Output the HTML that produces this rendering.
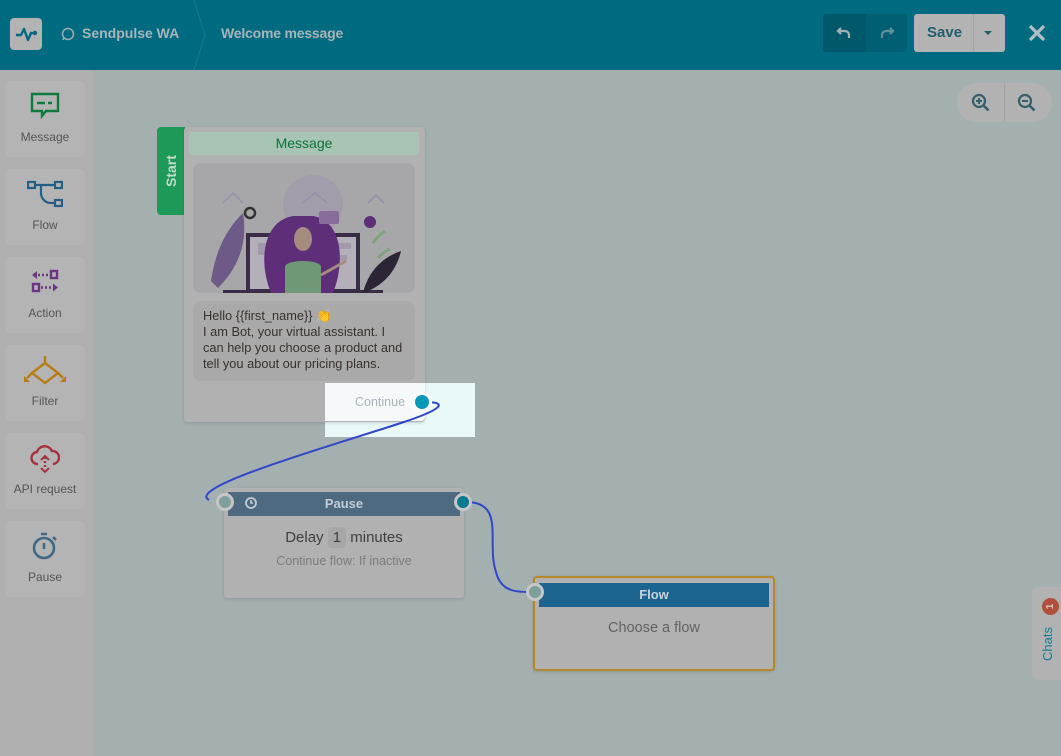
<!DOCTYPE html>
<html><head><meta charset="utf-8"><style>
*{box-sizing:border-box;margin:0;padding:0}
body{width:1061px;height:756px;overflow:hidden;font-family:"Liberation Sans",sans-serif;background:#a4b0b0;position:relative}
.hdr{position:absolute;left:0;top:0;width:1061px;height:70px;background:#006a80}
.abs{position:absolute}
.side{position:absolute;left:0;top:70px;width:95px;height:686px;background:#afafaf;border-right:1px solid #a3aaaa}
.tool{position:absolute;left:5px;width:80px;height:76px;background:#b4b4b4;border-radius:5px;text-align:center;font-size:12px;color:#555}
.tool svg{position:absolute;left:25px;top:10px}
.tool span{position:absolute;left:0;right:0;top:49px}
.node{position:absolute;background:#b1b1b1;border-radius:4px;box-shadow:0 1px 3px rgba(0,0,0,.15)}
.dot{position:absolute;width:18px;height:18px;border-radius:50%;border:3px solid #c6c6c6}
</style></head><body>
<div class="hdr">
 <div class="abs" style="left:10px;top:18px;width:32px;height:32px;background:#b3b3b3;border-radius:4px">
  <svg width="32" height="32"><path d="M6 17h5l3-6 4 11 3-7h3" fill="none" stroke="#006a80" stroke-width="2.4" stroke-linejoin="round"/><circle cx="25" cy="15" r="2.2" fill="#006a80"/></svg>
 </div>
 <svg class="abs" style="left:61px;top:27px" width="14" height="14"><circle cx="7" cy="7" r="5.5" fill="none" stroke="#a0aeb0" stroke-width="1.5"/><path d="M2 13l1.2-3" stroke="#a0aeb0" stroke-width="1.5"/></svg>
 <div class="abs" style="left:82px;top:25px;font-size:14px;font-weight:bold;color:#a8b4b6">Sendpulse WA</div>
 <svg class="abs" style="left:190px;top:0" width="20" height="70"><path d="M4 0l11 35L4 70" fill="none" stroke="#1b7a8e" stroke-width="1"/></svg>
 <div class="abs" style="left:221px;top:25px;font-size:14px;font-weight:bold;color:#a8b4b6;letter-spacing:-0.2px">Welcome message</div>
 <div class="abs" style="left:823px;top:14px;width:84px;height:38px;background:#005f73;border-radius:3px"></div>
 <div class="abs" style="left:823px;top:14px;width:43px;height:38px;background:#00586b;border-radius:3px 0 0 3px"></div>
 <svg class="abs" style="left:836px;top:24px" width="18" height="18"><path d="M5 4L2 7l3 3M2 7h7a4 4 0 014 4v3" fill="none" stroke="#a3b0b2" stroke-width="2.2"/></svg>
 <svg class="abs" style="left:877px;top:24px" width="18" height="18"><path d="M13 4l3 3-3 3M16 7H9a4 4 0 00-4 4v3" fill="none" stroke="#5f8f99" stroke-width="2.2"/></svg>
 <div class="abs" style="left:914px;top:14px;width:91px;height:38px;background:#b3b3b3;border-radius:3px"></div>
 <div class="abs" style="left:973px;top:14px;width:1px;height:38px;background:#a2a2a2"></div>
 <div class="abs" style="left:927px;top:24px;font-size:15px;font-weight:bold;color:#1d5f6e">Save</div>
 <svg class="abs" style="left:983px;top:30px" width="10" height="6"><path d="M1 1h8L5 5z" fill="#1d5f6e"/></svg>
 <svg class="abs" style="left:1027px;top:23px" width="20" height="20"><path d="M3 3l14 14M17 3L3 17" stroke="#b3c0c2" stroke-width="3.2"/></svg>
</div>

<div class="side">
 <div class="tool" style="top:11px"><svg width="30" height="30"><path d="M2 3h26v17H16l-4 5v-5H2z" fill="none" stroke="#0e7a3c" stroke-width="2.4"/><path d="M7 12h8M18 12h4" stroke="#0e7a3c" stroke-width="2.4"/></svg><span>Message</span></div>
 <div class="tool" style="top:99px"><svg width="36" height="30" style="left:22px"><rect x="1" y="3" width="7" height="6" fill="none" stroke="#235e86" stroke-width="2.2"/><rect x="28" y="3" width="7" height="6" fill="none" stroke="#235e86" stroke-width="2.2"/><rect x="28" y="21" width="7" height="6" fill="none" stroke="#235e86" stroke-width="2.2"/><path d="M8 6h20M14 6v8a10 10 0 0010 10h4" fill="none" stroke="#235e86" stroke-width="2.2"/></svg><span>Flow</span></div>
 <div class="tool" style="top:187px"><svg width="30" height="30"><path d="M2 8l5-4v8z" fill="#6c3583"/><path d="M8 8h2M12 8h2M16 8h2" stroke="#6c3583" stroke-width="2.4"/><rect x="21" y="4" width="6" height="7" fill="none" stroke="#6c3583" stroke-width="2.4"/><rect x="3" y="17" width="6" height="7" fill="none" stroke="#6c3583" stroke-width="2.4"/><path d="M11 20.5h2M15 20.5h2M19 20.5h2" stroke="#6c3583" stroke-width="2.4"/><path d="M28 20.5l-5-4v8z" fill="#6c3583"/></svg><span>Action</span></div>
 <div class="tool" style="top:275px"><svg width="44" height="30" style="left:18px"><path d="M22 1v7M22 8L9 18 22 28 35 18z" fill="none" stroke="#b87d12" stroke-width="2.4"/><path d="M9 18l-5 5M35 18l5 5" stroke="#b87d12" stroke-width="2.4"/><path d="M1 21l6 6H1zM43 21l-6 6h6z" fill="#b87d12"/></svg><span>Filter</span></div>
 <div class="tool" style="top:363px"><svg width="30" height="32"><path d="M8 21a6 6 0 01-1-12 8 8 0 0115-1 6 6 0 011 13" fill="none" stroke="#a5333f" stroke-width="2.4"/><path d="M15 14v12" stroke="#a5333f" stroke-width="2.4" stroke-dasharray="2 2"/><path d="M11 17l4-4 4 4M11 25l4 4 4-4" fill="none" stroke="#a5333f" stroke-width="2"/></svg><span>API request</span></div>
 <div class="tool" style="top:451px"><svg width="30" height="30"><circle cx="14" cy="17" r="10" fill="none" stroke="#3e6886" stroke-width="2.6"/><path d="M14 12v6" stroke="#3e6886" stroke-width="2.6"/><path d="M11 3h6M23 6l3 3" stroke="#3e6886" stroke-width="2.6"/></svg><span>Pause</span></div>
</div>

<div class="abs" style="left:957px;top:83px;width:95px;height:39px;background:#b2b2b2;border-radius:20px"></div>
<div class="abs" style="left:1004px;top:83px;width:1px;height:39px;background:#a4a4a4"></div>
<svg class="abs" style="left:971px;top:93px" width="20" height="20"><circle cx="8" cy="8" r="6" fill="none" stroke="#365e6c" stroke-width="2.2"/><path d="M12.5 12.5l5 5" stroke="#365e6c" stroke-width="2.6"/><path d="M5 8h6M8 5v6" stroke="#365e6c" stroke-width="2"/></svg>
<svg class="abs" style="left:1017px;top:93px" width="20" height="20"><circle cx="8" cy="8" r="6" fill="none" stroke="#365e6c" stroke-width="2.2"/><path d="M12.5 12.5l5 5" stroke="#365e6c" stroke-width="2.6"/><path d="M5 8h6" stroke="#365e6c" stroke-width="2"/></svg>

<div class="abs" style="left:325px;top:383px;width:150px;height:54px;background:#e9f8f9"></div>

<div class="abs" style="left:157px;top:127px;width:28px;height:88px;background:#1e9a58;border-radius:4px 0 0 4px"></div>
<div class="abs" style="left:157px;top:127px;width:28px;height:88px;color:#c8d8cc;font-weight:bold;font-size:14px;writing-mode:vertical-rl;transform:rotate(180deg);text-align:center;line-height:28px">Start</div>
<div class="node" style="left:184px;top:127px;width:241px;height:295px">
 <div class="abs" style="left:5px;top:5px;width:230px;height:23px;background:#a8c4b4;color:#10703c;text-align:center;font-size:14px;line-height:23px">Message</div>
 <div class="abs" style="left:9px;top:36px;width:222px;height:130px;background:#a7a7a9;border-radius:8px;overflow:hidden">
  <svg width="222" height="130">
   <circle cx="120" cy="42" r="30" fill="#a29dab"/>
   <path d="M30 40l10-10 10 10M110 40l12-10 12 10M175 40l8-8 8 8" fill="none" stroke="#968fa5" stroke-width="1.5"/>
   <rect x="53" y="70" width="114" height="58" fill="#392c46"/>
   <rect x="57" y="74" width="106" height="52" fill="#b4b0b9"/>
   <rect x="30" y="127" width="160" height="3" fill="#392c46"/>
   <rect x="65" y="80" width="30" height="12" fill="#a399ad"/>
   <rect x="130" y="80" width="28" height="6" fill="#a399ad"/>
   <rect x="130" y="92" width="24" height="6" fill="#a399ad"/>
   <path d="M100 53c-30 5-35 45-22 77h62c12-30 10-72-20-77z" fill="#5e2f78"/>
   <ellipse cx="110" cy="76" rx="9" ry="12" fill="#a58b80"/>
   <path d="M92 130v-26c0-8 36-8 36 0v26z" fill="#6f9877"/>
   <path d="M128 112l25-14" stroke="#a58b80" stroke-width="3"/>
   <path d="M18 118c6-40 22-58 32-68 5 30-5 55-25 75z" fill="#6d5a86"/>
   <path d="M170 130c5-22 20-36 38-42-5 22-20 36-38 42z" fill="#2d2535"/>
   <path d="M180 80c5-8 10-10 12-12M185 95c5-6 10-8 12-9" stroke="#7fa37e" stroke-width="3"/>
   <rect x="126" y="48" width="20" height="13" rx="2" fill="#8a6c9c"/>
   <circle cx="177" cy="59" r="6" fill="#5e2f78"/>
   <circle cx="57" cy="50" r="5" fill="none" stroke="#333" stroke-width="2.5"/>
  </svg>
 </div>
 <div class="abs" style="left:9px;top:174px;width:222px;height:80px;background:#a9a9a9;border-radius:8px;padding:7px 10px;font-size:12.8px;line-height:16px;color:#3a3030;white-space:nowrap">Hello {{first_name}} 👏<br>I am Bot, your virtual assistant. I<br>can help you choose a product and<br>tell you about our pricing plans.</div>
</div>
<div class="abs" style="left:325px;top:383px;width:100px;height:38px;background:#f6f9f9;border-radius:0 0 4px 0"></div>
<div class="abs" style="left:355px;top:395px;font-size:12.5px;color:#a8b3bc">Continue</div>

<svg class="abs" style="left:0;top:0" width="1061" height="756">
 <path d="M424 402c30 0 10 10-20 20-60 20-220 65-195 78" fill="none" stroke="#2f47c8" stroke-width="2"/>
 <path d="M466 502c40 0 20 40 30 70 5 20 20 20 36 20" fill="none" stroke="#2f47c8" stroke-width="2"/>
</svg>
<div class="dot" style="background:#0698b8;border-color:#fff;border-width:3px;width:20px;height:20px;left:412px;top:392px"></div>

<div class="node" style="left:224px;top:488px;width:240px;height:110px">
 <div class="abs" style="left:4px;top:4px;width:232px;height:24px;background:#4e6a80;color:#c5ccd2;font-weight:bold;font-size:13px;text-align:center;line-height:24px">Pause</div>
 <svg class="abs" style="left:20px;top:8px" width="14" height="14"><circle cx="7" cy="7" r="5" fill="none" stroke="#c5ccd2" stroke-width="1.8"/><path d="M7 4v3h2" fill="none" stroke="#c5ccd2" stroke-width="1.6"/></svg>
 <div class="abs" style="left:0;right:0;top:41px;text-align:center;font-size:15px;color:#3f3f3f">Delay <span style="background:#a7a7a7;padding:2px 5px;border-radius:3px">1</span> minutes</div>
 <div class="abs" style="left:0;right:0;top:66px;text-align:center;font-size:12.5px;color:#7c7c7c">Continue flow: If inactive</div>
</div>
<div class="dot" style="left:216px;top:493px;background:#7f9f9d"></div>
<div class="dot" style="left:454px;top:493px;background:#067a92"></div>

<div class="node" style="left:533px;top:576px;width:242px;height:95px;border:2px solid #b5882a;border-radius:4px">
 <div class="abs" style="left:4px;top:5px;width:230px;height:24px;background:#1c6590;color:#c5d2dc;font-weight:bold;font-size:13px;text-align:center;line-height:24px">Flow</div>
 <div class="abs" style="left:0;right:0;top:42px;text-align:center;font-size:14.5px;color:#636363">Choose a flow</div>
</div>
<div class="dot" style="left:526px;top:583px;background:#7f9f9d"></div>

<div class="abs" style="left:1032px;top:587px;width:34px;height:93px;background:#b2b2b2;border-radius:6px"></div>
<div class="abs" style="left:1042px;top:598px;width:17px;height:17px;border-radius:50%;background:#b0503a;color:#d8c8c0;font-size:10px;font-weight:bold;text-align:center;line-height:17px;transform:rotate(-90deg)">1</div>
<div class="abs" style="left:1036px;top:620px;width:24px;height:48px;writing-mode:vertical-rl;transform:rotate(180deg);font-size:13px;color:#1b7a92;text-align:center;line-height:24px">Chats</div>
</body></html>
